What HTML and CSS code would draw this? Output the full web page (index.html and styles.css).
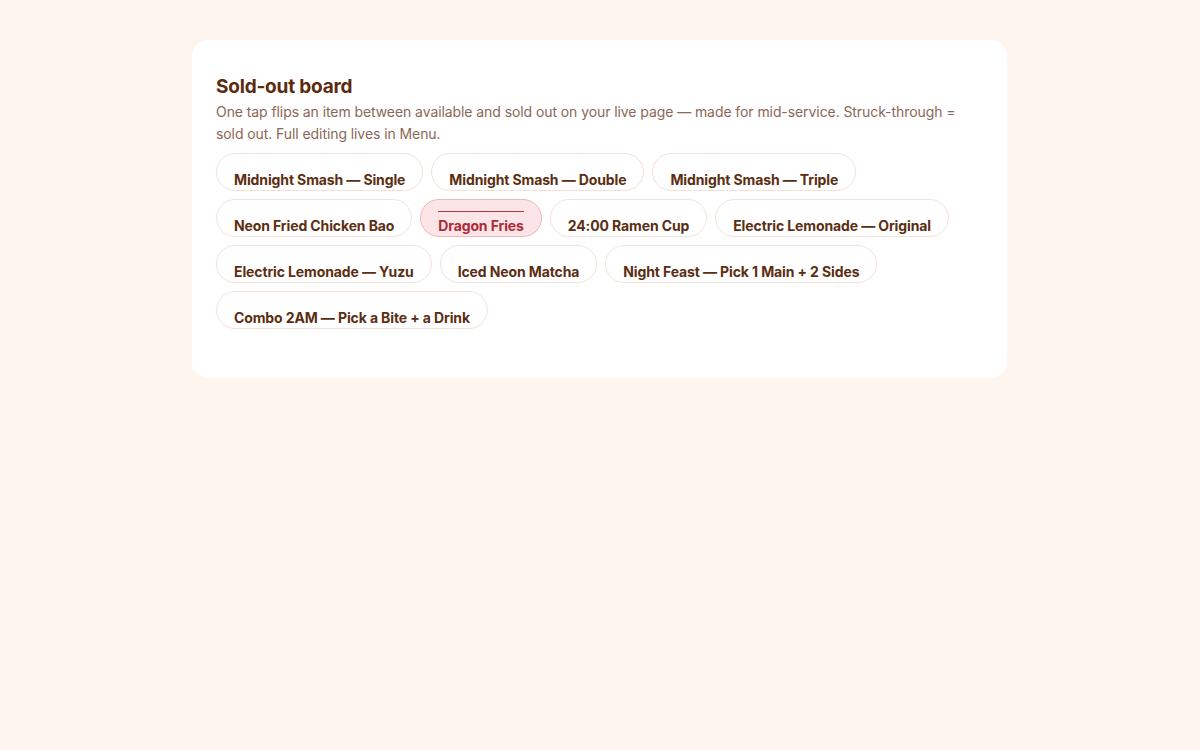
FILE: index.html
```html
<!DOCTYPE html>
<html>
<head>
<meta charset="utf-8">
<link rel="stylesheet" href="styles.css">
</head>
<body>
<main class="page">
  <section class="card">
    <h1 class="title">Sold-out board</h1>
    <p class="desc">One tap flips an item between available and sold out on your live page — made for mid-service. Struck-through = sold out. Full editing lives in Menu.</p>
    <div class="chips">
      <button class="chip"><span>Midnight Smash — Single</span></button>
      <button class="chip"><span>Midnight Smash — Double</span></button>
      <button class="chip"><span>Midnight Smash — Triple</span></button>
      <button class="chip"><span>Neon Fried Chicken Bao</span></button>
      <button class="chip sold"><span>Dragon Fries</span></button>
      <button class="chip"><span>24:00 Ramen Cup</span></button>
      <button class="chip"><span>Electric Lemonade — Original</span></button>
      <button class="chip"><span>Electric Lemonade — Yuzu</span></button>
      <button class="chip"><span>Iced Neon Matcha</span></button>
      <button class="chip"><span>Night Feast — Pick 1 Main + 2 Sides</span></button>
      <button class="chip"><span>Combo 2AM — Pick a Bite + a Drink</span></button>
    </div>
  </section>
</main>
</body>
</html>
```
FILE: styles.css
```css
* { box-sizing: border-box; }
html, body { margin: 0; padding: 0; }
body {
  background: #fff5ef;
  font-family: Inter, "Noto Sans", sans-serif;
  width: 1200px;
  height: 750px;
}
.page {
  padding: 40px 0 0 192px;
}
.card {
  width: 815px;
  background: #ffffff;
  border-radius: 16px;
  padding: 35px 24px 49px 24px;
}
.title {
  margin: 0;
  font-size: 19px;
  line-height: 24px;
  font-weight: 700;
  color: #5b2b0f;
  letter-spacing: -0.2px;
}
.desc {
  margin: 2px 0 8px 0;
  font-size: 14px;
  line-height: 22px;
  color: #8b6757;
  letter-spacing: -0.08px;
}
.chips {
  display: flex;
  flex-wrap: wrap;
  gap: 8px;
}
.chip {
  position: relative;
  height: 38px;
  padding: 15px 17px 0 17px;
  border: 1px solid #f3e2d8;
  border-radius: 19px;
  background: #ffffff;
  font-family: inherit;
  font-size: 14px;
  line-height: 22px;
  font-weight: 700;
  color: #5b2e12;
  letter-spacing: -0.12px;
  display: flex;
  align-items: flex-start;
}
.chip span { display: block; line-height: 22px; }
.chip.sold {
  background: #fbe5e6;
  border-color: #ebb8bc;
  color: #ae2a3a;
}
.chip.sold::before {
  content: "";
  position: absolute;
  left: 17px;
  right: 17px;
  top: 11px;
  height: 1px;
  background: #b23a3e;
}
```
